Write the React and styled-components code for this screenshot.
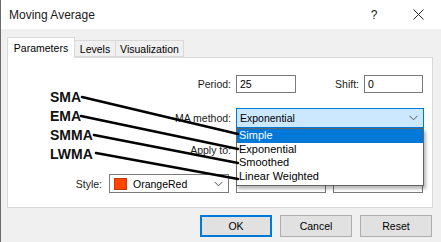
import styled, { createGlobalStyle } from 'styled-components';

const GlobalStyle = createGlobalStyle`
  html, body {
    margin: 0;
    padding: 0;
    background: #f0f0f0;
  }
  body {
    font-family: "Liberation Sans", Arial, sans-serif;
    font-size: 10.5px;
    color: #000;
  }
`;

const Window = styled.div`
  position: relative;
  width: 441px;
  height: 242px;
  box-sizing: border-box;
  border-left: 1px solid #6b6b6b;
  display: flex;
  flex-direction: column;
  background: #f0f0f0;
  overflow: hidden;
`;

const TitleBar = styled.div`
  height: 29px;
  flex-shrink: 0;
  background: #fff;
  display: flex;
  align-items: center;
  padding-left: 8px;
  font-size: 12px;
  color: #1a1a1a;
`;

const Title = styled.span`
  flex: 1;
`;

const HelpButton = styled.span`
  width: 20px;
  text-align: center;
  font-size: 12px;
  margin-right: 11px;
`;

const CloseButton = styled.span`
  width: 46px;
  display: flex;
  justify-content: center;
`;

const Body = styled.div`
  flex: 1;
  display: flex;
  flex-direction: column;
  padding: 8px 8px 0 6px;
`;

const TabStrip = styled.div`
  display: flex;
  align-items: flex-end;
  height: 20px;
  position: relative;
  z-index: 1;
`;

const Tab = styled.div`
  width: ${p => p.$w}px;
  height: ${p => (p.$active ? 21 : 17)}px;
  margin-bottom: ${p => (p.$active ? -1 : 0)}px;
  margin-left: ${p => (p.$first ? 0 : -1)}px;
  box-sizing: border-box;
  border: 1px solid #d9d9d9;
  border-bottom: ${p => (p.$active ? 'none' : '1px solid #d9d9d9')};
  background: ${p => (p.$active ? '#fff' : '#f0f0f0')};
  display: flex;
  align-items: center;
  justify-content: center;
  padding-bottom: ${p => (p.$active ? 1 : 0)}px;
`;

const Panel = styled.div`
  width: 426px;
  height: 151px;
  box-sizing: border-box;
  border: 1px solid #d9d9d9;
  background: #fff;
  position: relative;
  display: flex;
  flex-direction: column;
`;

const Row = styled.div`
  display: flex;
  align-items: center;
  gap: ${p => p.$gap || 5}px;
  height: ${p => p.$h}px;
  margin-top: ${p => p.$mt}px;
`;

const Label = styled.span`
  width: ${p => p.$w}px;
  flex-shrink: 0;
  text-align: right;
  color: #1a1a1a;
`;

const TextBox = styled.div`
  width: ${p => p.$w}px;
  height: 100%;
  box-sizing: border-box;
  border: 1px solid #7a7a7a;
  background: #fff;
  display: flex;
  align-items: center;
  padding-left: 3px;
`;

const ComboWrap = styled.div`
  position: relative;
  width: ${p => p.$w}px;
  height: 100%;
  flex-shrink: 0;
`;

const Combo = styled.div`
  height: 100%;
  box-sizing: border-box;
  border: 1px solid ${p => (p.$active ? '#0078d7' : '#7a7a7a')};
  background: ${p => (p.$active ? '#cce8ff' : '#fff')};
  display: flex;
  align-items: center;
  padding: 0 5px 0 3px;
  gap: 6px;
`;

const ComboText = styled.span`
  flex: 1;
  white-space: nowrap;
`;

const Swatch = styled.span`
  width: 13px;
  height: 12px;
  box-sizing: border-box;
  background: #ff4500;
  border: 1px solid #c23a0c;
  margin-left: 1px;
`;

const LineSample = styled.span`
  flex: 1;
  height: 2px;
  background: #101030;
  margin-right: 8px;
`;

const DropList = styled.div`
  position: absolute;
  top: 100%;
  left: 0;
  width: 100%;
  box-sizing: border-box;
  border: 1px solid #646464;
  background: #fff;
  padding-bottom: 2px;
  box-shadow: 2px 3px 3px rgba(0, 0, 0, 0.28);
  z-index: 5;
`;

const DropItem = styled.div`
  height: 13.5px;
  line-height: 13.5px;
  padding-left: 2px;
  font-size: 11px;
  background: ${p => (p.$selected ? '#0078d7' : 'transparent')};
  color: ${p => (p.$selected ? '#fff' : '#000')};
`;

const ButtonRow = styled.div`
  display: flex;
  justify-content: flex-end;
  gap: 8px;
  padding: 7px 1px 0 0;
`;

const Button = styled.div`
  width: 72px;
  height: 22px;
  box-sizing: border-box;
  border: ${p => (p.$default ? '2px solid #0078d7' : '1px solid #adadad')};
  background: #e1e1e1;
  display: flex;
  align-items: center;
  justify-content: center;
`;

const Overlay = styled.div`
  position: absolute;
  inset: 0;
  pointer-events: none;
  z-index: 10;
`;

const Arrows = styled.svg`
  position: absolute;
  left: 0;
  top: 0;
`;

const Notes = styled.div`
  position: absolute;
  left: 49px;
  top: 88px;
  display: flex;
  flex-direction: column;
  font-size: 14px;
  font-weight: bold;
  line-height: 19px;
  color: #111;
`;

const Chevron = () => (
  <svg width="9" height="6" viewBox="0 0 9 6">
    <polyline points="0.5,0.8 4.5,4.8 8.5,0.8" fill="none" stroke="#555" strokeWidth="1" />
  </svg>
);

const lines = [
  [81, 97, 237, 134],
  [80, 116, 237, 149],
  [93, 135, 237, 163],
  [95, 153, 237, 179],
];

const App = () => {
  return (
    <>
      <GlobalStyle />
      <Window>
        <TitleBar>
          <Title>Moving Average</Title>
          <HelpButton>?</HelpButton>
          <CloseButton>
            <svg width="11" height="11" viewBox="0 0 11 11">
              <path d="M0.5 0.5 L10.5 10.5 M10.5 0.5 L0.5 10.5" stroke="#222" strokeWidth="1" />
            </svg>
          </CloseButton>
        </TitleBar>
        <Body>
          <TabStrip>
            <Tab $w={68} $active $first>Parameters</Tab>
            <Tab $w={42}>Levels</Tab>
            <Tab $w={69}>Visualization</Tab>
          </TabStrip>
          <Panel>
            <Row $h={18} $mt={17}>
              <Label $w={223}>Period:</Label>
              <TextBox $w={60}>25</TextBox>
              <Label $w={58}>Shift:</Label>
              <TextBox $w={59}>0</TextBox>
            </Row>
            <Row $h={20} $mt={15}>
              <Label $w={223}>MA method:</Label>
              <ComboWrap $w={188}>
                <Combo $active>
                  <ComboText>Exponential</ComboText>
                  <Chevron />
                </Combo>
                <DropList>
                  <DropItem $selected>Simple</DropItem>
                  <DropItem>Exponential</DropItem>
                  <DropItem>Smoothed</DropItem>
                  <DropItem>Linear Weighted</DropItem>
                </DropList>
              </ComboWrap>
            </Row>
            <Row $h={20} $mt={12}>
              <Label $w={223}>Apply to:</Label>
              <ComboWrap $w={188}>
                <Combo>
                  <ComboText />
                  <Chevron />
                </Combo>
              </ComboWrap>
            </Row>
            <Row $h={19} $mt={14} $gap={7}>
              <Label $w={94}>Style:</Label>
              <ComboWrap $w={120}>
                <Combo>
                  <Swatch />
                  <ComboText>OrangeRed</ComboText>
                  <Chevron />
                </Combo>
              </ComboWrap>
              <ComboWrap $w={90}>
                <Combo>
                  <LineSample />
                  <Chevron />
                </Combo>
              </ComboWrap>
              <ComboWrap $w={90}>
                <Combo>
                  <LineSample />
                  <Chevron />
                </Combo>
              </ComboWrap>
            </Row>
          </Panel>
          <ButtonRow>
            <Button $default>OK</Button>
            <Button>Cancel</Button>
            <Button>Reset</Button>
          </ButtonRow>
        </Body>
        <Overlay>
          <Arrows width="441" height="242" viewBox="0 0 441 242">
            {lines.map(([x1, y1, x2, y2], i) => (
              <line key={i} x1={x1} y1={y1} x2={x2} y2={y2} stroke="#000" strokeWidth="2.6" strokeLinecap="round" />
            ))}
          </Arrows>
          <Notes>
            <span>SMA</span>
            <span>EMA</span>
            <span>SMMA</span>
            <span>LWMA</span>
          </Notes>
        </Overlay>
      </Window>
    </>
  );
};

export default App;
